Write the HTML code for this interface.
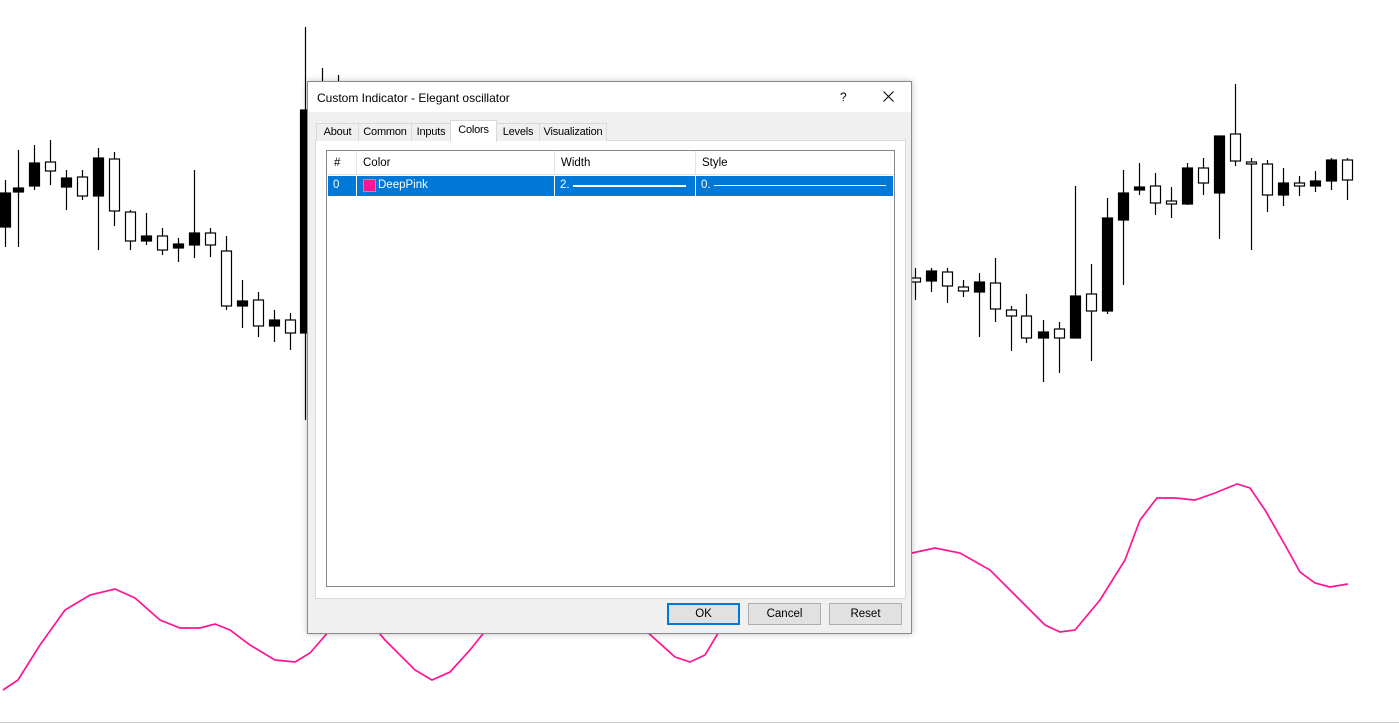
<!DOCTYPE html>
<html><head><style>
body{margin:0;width:1399px;height:725px;background:#fff;position:relative;overflow:hidden;font-family:"Liberation Sans",sans-serif;font-size:11.5px;color:#000}
.abs{position:absolute}
.dlg{left:307px;top:81px;width:603px;height:551px;background:#f0f0f0;border:1px solid #8a8a8a;box-shadow:0 0 6px rgba(0,0,0,.25)}
.title{left:0;top:0;width:603px;height:30px;background:#fff;font-size:12px}
.tab{top:41px;height:17px;border:1px solid #d9d9d9;border-bottom:none;background:#f0f0f0;line-height:17px;text-align:center;font-size:11px;letter-spacing:-0.2px}
.btn{top:521px;width:71px;height:20px;border:1px solid #adadad;background:#e1e1e1;text-align:center;line-height:20px;font-size:11.5px}
</style></head><body>
<svg class="abs" style="left:0;top:0" width="1399" height="725">
<line x1="0" y1="722.5" x2="1399" y2="722.5" stroke="#ccc"/>
<g id="c" stroke="#000" stroke-width="1.2"></g>
<polyline fill="none" stroke="#ff1493" stroke-width="1.7" points="3,690 18,680 40,645 65,610 90,595 115,589 135,598 160,620 180,628 200,628 215,624 230,630 250,645 275,660 295,662 310,653 330,630 360,610 385,640 415,670 432,680 450,672 470,650 490,625 645,630 675,657 690,662 705,655 720,630 912,553 935,548 960,553 990,570 1020,600 1045,625 1060,632 1075,630 1100,600 1125,560 1140,520 1157,498 1175,498 1195,500 1215,493 1237,484 1250,488 1265,510 1285,545 1300,572 1315,583 1330,587 1348,584"/>
</svg>
<script>
var d=[[5,193,227,1,180,247],[18,188,192,1,150,247],[34,163,186,1,145,190],[50,162,171,0,140,185],[66,178,187,1,170,210],[82,177,196,0,170,200],[98,158,196,1,148,250],[114,159,211,0,152,226],[130,212,241,0,210,250],[146,236,241,1,213,245],[162,236,250,0,228,255],[178,244,248,1,238,262],[194,233,245,1,170,258],[210,233,245,0,228,257],[226,251,306,0,236,310],[242,301,306,1,280,328],[258,300,326,0,292,337],[274,320,326,1,310,342],[290,320,333,0,313,350],[305,110,333,1,27,420],[322,90,100,0,68,100],[338,90,100,0,75,100],
[915,278,282,0,268,300],[931,271,281,1,268,292],[947,272,286,0,268,303],[963,287,291,0,280,297],[979,282,292,1,273,337],[995,283,309,0,258,322],[1011,310,316,0,306,351],[1026,316,338,0,294,343],[1043,332,338,1,320,382],[1059,329,338,0,322,373],[1075,296,338,1,186,338],[1091,294,311,0,264,361],[1107,218,311,1,198,314],[1123,193,220,1,170,285],[1139,187,190,1,163,195],[1155,186,203,0,173,215],[1171,201,204,0,187,218],[1187,168,204,1,163,205],[1203,168,183,0,158,195],[1219,136,193,1,136,239],[1235,134,161,0,84,166],[1251,162,164,0,158,250],[1267,164,195,0,160,212],[1283,183,195,1,168,206],[1299,183,186,0,176,196],[1315,181,186,1,171,192],[1331,160,181,1,158,190],[1347,160,180,0,158,200]];
var g=document.getElementById('c'),s='';
d.forEach(function(a){s+='<line x1="'+(a[0]+.5)+'" y1="'+a[4]+'" x2="'+(a[0]+.5)+'" y2="'+a[5]+'"/>';s+='<rect x="'+(a[0]-4.5)+'" y="'+a[1]+'" width="10" height="'+Math.max(a[2]-a[1],2)+'" fill="'+(a[3]?'#000':'#fff')+'"/>';});
g.innerHTML=s;
</script>
<div class="abs dlg">
 <div class="abs title"><span class="abs" style="left:9px;top:9px">Custom Indicator - Elegant oscillator</span><span class="abs" style="left:532px;top:8px;font-size:12px">?</span>
 <svg class="abs" style="left:575px;top:9px" width="11" height="11"><path d="M0.5 0.5L10.5 10.5M10.5 0.5L0.5 10.5" stroke="#000" stroke-width="1"/></svg></div>
 <div class="abs" style="left:7px;top:58px;width:589px;height:457px;background:#fff;border:1px solid #d9d9d9"></div>
 <div class="abs tab" style="left:8px;width:41px">About</div>
 <div class="abs tab" style="left:50px;width:52px">Common</div>
 <div class="abs tab" style="left:103px;width:38px">Inputs</div>
 <div class="abs tab" style="left:142px;top:38px;height:21px;width:45px;background:#fff;line-height:19px">Colors</div>
 <div class="abs tab" style="left:188px;width:42px">Levels</div>
 <div class="abs tab" style="left:231px;width:66px">Visualization</div>
 <div class="abs" style="left:18px;top:68px;width:567px;height:435px;border:1px solid #828790;background:#fff">
  <div class="abs" style="left:0;top:0;width:567px;height:23px;border-bottom:1px solid #e5e5e5"></div>
  <div class="abs" style="left:29px;top:0;width:1px;height:23px;background:#e5e5e5"></div>
  <div class="abs" style="left:227px;top:0;width:1px;height:23px;background:#e5e5e5"></div>
  <div class="abs" style="left:368px;top:0;width:1px;height:23px;background:#e5e5e5"></div>
  <span class="abs" style="left:7px;top:6px">#</span><span class="abs" style="left:36px;top:6px">Color</span><span class="abs" style="left:234px;top:6px">Width</span><span class="abs" style="left:375px;top:6px">Style</span>
  <div class="abs" style="left:1px;top:25px;width:565px;height:20px;background:#0078d7;color:#fff">
   <span class="abs" style="left:5px;top:3px">0</span>
   <div class="abs" style="left:28px;top:0;width:1px;height:20px;background:#fff"></div>
   <div class="abs" style="left:35px;top:3px;width:11px;height:11px;background:#ff1493;border:1px solid #999"></div>
   <span class="abs" style="left:50px;top:3px">DeepPink</span>
   <div class="abs" style="left:226px;top:0;width:1px;height:20px;background:#fff"></div>
   <span class="abs" style="left:232px;top:3px">2.</span><div class="abs" style="left:245px;top:9px;width:113px;height:2px;background:#fff"></div>
   <div class="abs" style="left:367px;top:0;width:1px;height:20px;background:#fff"></div>
   <span class="abs" style="left:373px;top:3px">0.</span><div class="abs" style="left:386px;top:9px;width:172px;height:1px;background:#fff"></div>
  </div>
 </div>
 <div class="abs btn" style="left:359px;border:2px solid #0078d7;width:69px;height:18px;line-height:18px">OK</div>
 <div class="abs btn" style="left:440px">Cancel</div>
 <div class="abs btn" style="left:521px">Reset</div>
</div>
</body></html>
